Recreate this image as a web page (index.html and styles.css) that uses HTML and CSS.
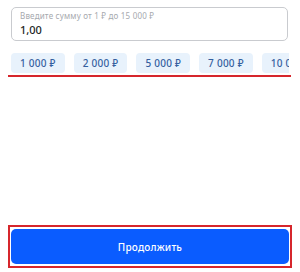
FILE: index.html
```html
<!DOCTYPE html>
<html lang="ru">
<head>
<meta charset="utf-8">
<link rel="stylesheet" href="styles.css">
</head>
<body>
<div class="page">
  <div class="field">
    <div class="label">Введите сумму от 1 ₽ до 15 000 ₽</div>
    <div class="value">1,00</div>
  </div>
  <div class="chips-mark">
    <div class="chips">
      <span class="chip">1 000 ₽</span>
      <span class="chip">2 000 ₽</span>
      <span class="chip">5 000 ₽</span>
      <span class="chip">7 000 ₽</span>
      <span class="chip">10 000 ₽</span>
    </div>
  </div>
  <div class="btn-mark">
    <button class="btn">Продолжить</button>
  </div>
</div>
</body>
</html>
```

FILE: styles.css
```css
* { box-sizing: border-box; }
html, body { margin: 0; padding: 0; background: #fff; }
body { font-family: "Noto Sans", "Open Sans", sans-serif; }
.page {
  height: 272px;
  display: flex;
  flex-direction: column;
  padding: 7px 11px 4px 11px;
}
.field {
  width: 277px;
  height: 34px;
  border: 1px solid #c9cbcf;
  border-radius: 5px;
  padding: 3px 8px 0 8px;
}
.label {
  font-size: 8px;
  line-height: 10px;
  color: #a6a9ae;
  letter-spacing: 0.2px;
}
.value {
  font-size: 11px;
  line-height: 16px;
  color: #1c1f24;
  font-weight: 500;
  margin-top: 1px;
}
.chips-mark {
  margin: 12px -2px 0 -3px;
  padding: 0 2px 2px 3px;
  border-bottom: 2px solid #d6262c;
}
.chips {
  display: flex;
  gap: 9px;
  overflow: hidden;
}
.chip {
  flex: none;
  height: 20px;
  display: inline-flex;
  align-items: center;
  padding: 0 9px;
  background: #e8f2fc;
  border-radius: 4px;
  font-size: 10px;
  letter-spacing: 0.25px;
  font-weight: 500;
  color: #35609f;
  white-space: nowrap;
}
.btn-mark {
  margin: auto -3px 0 -3px;
  border: 2px solid #d6262c;
  padding: 2px 1px;
}
.btn {
  display: block;
  width: 100%;
  height: 35px;
  border: none;
  border-radius: 5px;
  background: #0a5cff;
  color: #fff;
  font-family: inherit;
  font-size: 10px;
  font-weight: 500;
  letter-spacing: 0.2px;
}
```
